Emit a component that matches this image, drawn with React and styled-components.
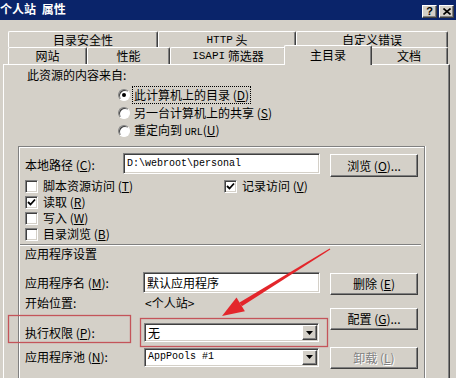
import React from "react";
import styled, { createGlobalStyle, css } from "styled-components";

const GlobalStyle = createGlobalStyle`
  html, body { margin: 0; padding: 0; background: #d4d0c8; }
  body {
    font-family: "Noto Sans CJK SC", "Liberation Sans", sans-serif;
    font-size: 12px;
    line-height: 16px;
    color: #000;
  }
`;

const raised = css`
  border-style: solid;
  border-width: 1px;
  border-color: #fff #404040 #404040 #fff;
  box-shadow: inset -1px -1px #808080;
`;

const sunken = css`
  border-style: solid;
  border-width: 1px;
  border-color: #808080 #fff #fff #808080;
  box-shadow: inset 1px 1px #404040, inset -1px -1px #d4d0c8;
`;

const Window = styled.div`
  position: relative;
  width: 456px;
  height: 378px;
  overflow: hidden;
  background: #d4d0c8;
`;

const TitleBar = styled.div`
  height: 20px;
  background: #0a246a;
  display: flex;
  align-items: flex-end;
  justify-content: space-between;
  padding: 0 2px 2px 0;
  box-sizing: border-box;
`;

const Title = styled.div`
  align-self: center;
  color: #fff;
  font-weight: bold;
  word-spacing: 3px;
  line-height: 20px;
`;

const CaptionButtons = styled.div`
  display: flex;
  gap: 2px;
`;

const CaptionButton = styled.div`
  ${raised};
  width: 15px;
  height: 13px;
  box-sizing: border-box;
  background: #d4d0c8;
  display: flex;
  align-items: center;
  justify-content: center;
  font: bold 11px/11px "Liberation Sans", sans-serif;
`;

const TabArea = styled.div`
  position: relative;
  z-index: 1;
  width: 440px;
  margin: 11px 0 0 8px;
`;

const TabRow = styled.div`
  display: flex;
  height: ${(p) => p.$h}px;
`;

const Tab = styled.div`
  width: ${(p) => p.$w}px;
  flex: none;
  box-sizing: border-box;
  background: #d4d0c8;
  border-top: 1px solid #fff;
  border-left: 1px solid #fff;
  border-right: 1px solid #404040;
  box-shadow: inset -1px 0 #808080;
  border-radius: 2px 2px 0 0;
  display: flex;
  align-items: center;
  justify-content: center;
  ${(p) =>
    p.$active &&
    css`
      position: relative;
      z-index: 2;
      width: ${p.$w + 4}px;
      margin: -2px -2px -1px;
      height: calc(100% + 3px);
      padding-bottom: 2px;
    `}
`;

const Mono = styled.span`
  font-family: "Liberation Mono", monospace;
  font-size: ${(p) => p.$size || 11}px;
`;

const Key = styled.span`
  text-decoration: underline;
`;

const Panel = styled.div`
  width: 447px;
  height: 314px;
  margin-left: 3px;
  box-sizing: border-box;
  border-top: 1px solid #fff;
  border-left: 1px solid #fff;
  border-right: 1px solid #404040;
  box-shadow: inset -1px 0 #808080;
  padding-top: 2px;
`;

const SourceLabel = styled.div`
  margin-left: 23px;
`;

const RadioList = styled.div`
  margin: 3px 0 0 114px;
`;

const RadioRow = styled.div`
  height: 18px;
  display: flex;
  align-items: center;
  gap: 3px;
`;

const RadioDot = styled.span`
  width: 12px;
  height: 12px;
  box-sizing: border-box;
  border-radius: 50%;
  border: 1px solid;
  border-color: #808080 #fff #fff #808080;
  box-shadow: inset 1px 1px #404040;
  background: #fff;
  display: flex;
  align-items: center;
  justify-content: center;
  &::after {
    content: "";
    width: 4px;
    height: 4px;
    border-radius: 50%;
    background: ${(p) => (p.$checked ? "#000" : "transparent")};
  }
`;

const RadioLabel = styled.span`
  padding: 0 1px;
  ${(p) => p.$focus && css`outline: 1px dotted #000;`}
`;

const GroupBox = styled.div`
  width: 407px;
  height: 240px;
  margin: 6px 0 0 14px;
  box-sizing: border-box;
  border: 1px solid #808080;
  border-bottom: none;
  box-shadow: inset 1px 1px #fff, 1px 0 #fff;
  padding: 6px 0 0 6px;
`;

const PathRow = styled.div`
  display: flex;
  align-items: flex-start;
  height: 24px;
`;

const FieldLabel = styled.span`
  width: ${(p) => p.$w}px;
  flex: none;
  align-self: center;
`;

const TextBox = styled.div`
  ${sunken};
  position: relative;
  width: ${(p) => p.$w}px;
  height: ${(p) => p.$h}px;
  flex: none;
  box-sizing: border-box;
  background: #fff;
  padding-left: 3px;
  display: flex;
  align-items: center;
  white-space: nowrap;
  overflow: hidden;
`;

const DropButton = styled.span`
  ${raised};
  position: absolute;
  right: 1px;
  top: 1px;
  bottom: 1px;
  width: 15px;
  box-sizing: border-box;
  background: #d4d0c8;
  display: flex;
  align-items: center;
  justify-content: center;
`;

const Button = styled.div`
  ${raised};
  width: 88px;
  height: ${(p) => p.$h || 22}px;
  margin-top: ${(p) => p.$mt || 0}px;
  margin-left: ${(p) => p.$ml || 0}px;
  box-sizing: border-box;
  background: #d4d0c8;
  display: flex;
  align-items: center;
  justify-content: center;
  flex: none;
  ${(p) =>
    p.$disabled &&
    css`
      color: #808080;
      text-shadow: 1px 1px #fff;
    `}
`;

const CheckGrid = styled.div`
  display: grid;
  grid-template-columns: 199px auto;
  grid-auto-rows: 16px;
  margin-top: 1px;
`;

const CheckRow = styled.div`
  display: flex;
  align-items: center;
  gap: 5px;
`;

const CheckBox = styled.span`
  ${sunken};
  width: 13px;
  height: 13px;
  box-sizing: border-box;
  background: #fff;
  display: flex;
  align-items: center;
  justify-content: center;
`;

const Separator = styled.div`
  width: 401px;
  margin: 2px 0 0 -5px;
  border-top: 1px solid #808080;
  border-bottom: 1px solid #fff;
`;

const AppSettings = styled.div`
  display: flex;
  margin-top: 10px;
`;

const FieldColumn = styled.div`
  width: 295px;
`;

const FieldRow = styled.div`
  display: flex;
  align-items: center;
  height: ${(p) => p.$h}px;
  margin-top: ${(p) => p.$mt}px;
`;

const ButtonColumn = styled.div`
  margin-left: 10px;
  padding-top: 1px;
`;

const Annotation = styled.svg`
  position: absolute;
  left: 0;
  top: 0;
  pointer-events: none;
`;

const Check = () => (
  <svg width="9" height="9" viewBox="0 0 9 9">
    <polyline points="1,4 3.5,6.5 8,1.5" fill="none" stroke="#000" strokeWidth="1.8" />
  </svg>
);

const Arrow = () => (
  <svg width="7" height="4" viewBox="0 0 7 4">
    <polygon points="0,0 7,0 3.5,4" fill="#000" />
  </svg>
);

const Select = ({ children, h }) => (
  <TextBox $w={175} $h={h}>
    {children}
    <DropButton>
      <Arrow />
    </DropButton>
  </TextBox>
);

const Option = ({ checked, children }) => (
  <CheckRow>
    <CheckBox>{checked && <Check />}</CheckBox>
    <span>{children}</span>
  </CheckRow>
);

export default function App() {
  return (
    <>
      <GlobalStyle />
      <Window>
        <TitleBar>
          <Title>个人站 属性</Title>
          <CaptionButtons>
            <CaptionButton>?</CaptionButton>
            <CaptionButton>
              <svg width="8" height="7" viewBox="0 0 8 7">
                <path d="M0.5 0.5 L7.5 6.5 M7.5 0.5 L0.5 6.5" stroke="#000" strokeWidth="1.6" />
              </svg>
            </CaptionButton>
          </CaptionButtons>
        </TitleBar>

        <TabArea>
          <TabRow $h={16}>
            <Tab $w={150}>目录安全性</Tab>
            <Tab $w={138}>
              <Mono>HTTP</Mono>&nbsp;头
            </Tab>
            <Tab $w={152}>自定义错误</Tab>
          </TabRow>
          <TabRow $h={17}>
            <Tab $w={79}>网站</Tab>
            <Tab $w={83}>性能</Tab>
            <Tab $w={116}>
              <Mono>ISAPI</Mono>&nbsp;筛选器
            </Tab>
            <Tab $w={84} $active>
              主目录
            </Tab>
            <Tab $w={78}>文档</Tab>
          </TabRow>
        </TabArea>

        <Panel>
          <SourceLabel>此资源的内容来自:</SourceLabel>
          <RadioList>
            <RadioRow>
              <RadioDot $checked />
              <RadioLabel $focus>
                此计算机上的目录 (<Key>D</Key>)
              </RadioLabel>
            </RadioRow>
            <RadioRow>
              <RadioDot />
              <RadioLabel>
                另一台计算机上的共享 (<Key>S</Key>)
              </RadioLabel>
            </RadioRow>
            <RadioRow>
              <RadioDot />
              <RadioLabel>
                重定向到 <Mono $size={10}>URL</Mono>(<Key>U</Key>)
              </RadioLabel>
            </RadioRow>
          </RadioList>

          <GroupBox>
            <PathRow>
              <FieldLabel $w={98}>
                本地路径 (<Key>C</Key>):
              </FieldLabel>
              <TextBox $w={197} $h={21}>
                <Mono $size={10}>D:\webroot\personal</Mono>
              </TextBox>
              <Button $mt={1} $h={23} $ml={10}>
                浏览 (<Key>O</Key>)...
              </Button>
            </PathRow>

            <CheckGrid>
              <Option>
                脚本资源访问 (<Key>T</Key>)
              </Option>
              <Option checked>
                记录访问 (<Key>V</Key>)
              </Option>
              <Option checked>
                读取 (<Key>R</Key>)
              </Option>
              <span />
              <Option>
                写入 (<Key>W</Key>)
              </Option>
              <span />
              <Option>
                目录浏览 (<Key>B</Key>)
              </Option>
            </CheckGrid>

            <Separator />
            <div>应用程序设置</div>

            <AppSettings>
              <FieldColumn>
                <FieldRow $h={21} $mt={0}>
                  <FieldLabel $w={118}>
                    应用程序名 (<Key>M</Key>):
                  </FieldLabel>
                  <TextBox $w={177} $h={21}>
                    默认应用程序
                  </TextBox>
                </FieldRow>
                <FieldRow $h={18} $mt={1}>
                  <FieldLabel $w={120}>开始位置:</FieldLabel>
                  <span>&lt;个人站&gt;</span>
                </FieldRow>
                <FieldRow $h={19} $mt={11}>
                  <FieldLabel $w={119}>
                    执行权限 (<Key>P</Key>):
                  </FieldLabel>
                  <Select h={19}>无</Select>
                </FieldRow>
                <FieldRow $h={18} $mt={6}>
                  <FieldLabel $w={119}>
                    应用程序池 (<Key>N</Key>):
                  </FieldLabel>
                  <Select h={19}>
                    <Mono $size={10}>AppPools #1</Mono>
                  </Select>
                </FieldRow>
              </FieldColumn>
              <ButtonColumn>
                <Button>
                  删除 (<Key>E</Key>)
                </Button>
                <Button $mt={13}>
                  配置 (<Key>G</Key>)...
                </Button>
                <Button $mt={17} $disabled>
                  卸载 (<Key>L</Key>)
                </Button>
              </ButtonColumn>
            </AppSettings>
          </GroupBox>
        </Panel>

        <Annotation width="456" height="378" viewBox="0 0 456 378">
          <rect x="8.5" y="315.5" width="122" height="27" fill="none" stroke="#c4545a" strokeWidth="1.3" />
          <rect x="140.5" y="318.5" width="187" height="28" fill="none" stroke="#c4545a" strokeWidth="1.3" />
          <polygon
            points="330.3,249.4 329.7,248.6 239.5,302.5 241.9,306.3"
            fill="#e3262b"
          />
          <polygon points="222,316 236.5,297.6 244.9,311.2" fill="#e3262b" />
        </Annotation>
      </Window>
    </>
  );
}
